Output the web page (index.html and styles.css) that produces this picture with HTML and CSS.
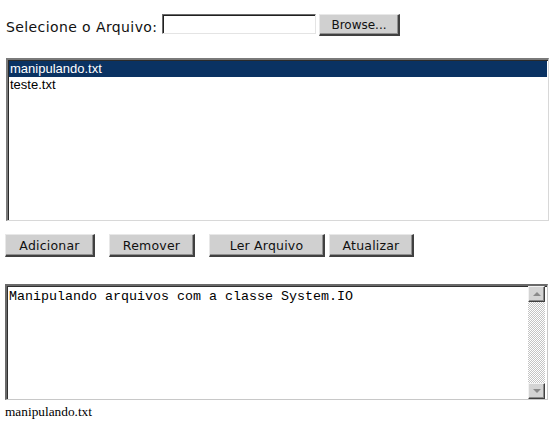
FILE: index.html
```html
<!DOCTYPE html>
<html>
<head>
<meta charset="utf-8">
<link rel="stylesheet" href="styles.css">
</head>
<body>
<div class="page">
  <div class="file-row">
    <span class="label">Selecione o Arquivo:</span>
    <span class="file-input"></span>
    <span class="btn browse">Browse...</span>
  </div>

  <div class="listbox">
    <div class="item selected">manipulando.txt</div>
    <div class="item">teste.txt</div>
  </div>

  <div class="actions">
    <span class="btn act w-add">Adicionar</span>
    <span class="btn act w-rem">Remover</span>
    <span class="btn act w-ler">Ler Arquivo</span>
    <span class="btn act w-atu">Atualizar</span>
  </div>

  <div class="textarea">
    <div class="ta-content">Manipulando arquivos com a classe System.IO</div>
    <div class="scrollbar">
      <div class="sb-btn"><span class="arrow up"></span></div>
      <div class="sb-track"></div>
      <div class="sb-btn"><span class="arrow down"></span></div>
    </div>
  </div>

  <div class="status">manipulando.txt</div>
</div>
</body>
</html>
```
FILE: styles.css
```css
html, body {
  margin: 0;
  padding: 0;
  background: #ffffff;
}

.page {
  width: 556px;
  height: 423px;
  overflow: hidden;
  box-sizing: border-box;
  padding-top: 14px;
}

.file-row {
  display: flex;
  align-items: flex-start;
  padding-left: 6px;
  height: 22px;
}

.label {
  font-family: "DejaVu Sans", Verdana, sans-serif;
  font-size: 14px;
  letter-spacing: 0.4px;
  color: #111;
  line-height: 22px;
  margin-top: 2px;
  width: 156px;
  white-space: nowrap;
}

.file-input {
  display: block;
  width: 154px;
  height: 20px;
  box-sizing: border-box;
  border-top: 1px solid #6b6b6b;
  border-left: 1px solid #6b6b6b;
  border-right: 1px solid #e4e4e4;
  border-bottom: 1px solid #e4e4e4;
  box-shadow: inset 1px 1px 0 #202020;
  background: #fff;
}

.btn {
  display: flex;
  align-items: center;
  justify-content: center;
  box-sizing: border-box;
  background: #d0d0d0;
  border-top: 1px solid #e8e8e8;
  border-left: 1px solid #e8e8e8;
  border-right: 2px solid #404040;
  border-bottom: 2px solid #404040;
  box-shadow: inset -1px -1px 0 #909090;
  font-family: "DejaVu Sans", Verdana, sans-serif;
  font-size: 12px;
  color: #111;
  white-space: nowrap;
}

.browse {
  width: 81px;
  height: 22px;
  margin-left: 3px;
}

.listbox {
  margin: 22px 0 0 6px;
  width: 543px;
  height: 163px;
  box-sizing: border-box;
  border-top: 2px solid #7a7a7a;
  border-left: 2px solid #7a7a7a;
  border-right: 1px solid #d8d8d8;
  border-bottom: 1px solid #d8d8d8;
  box-shadow: inset 1px 1px 0 #2a2a2a;
  padding: 1px 1px 0 1px;
  background: #fff;
}

.item {
  font-family: "Liberation Sans", Arial, sans-serif;
  font-size: 13px;
  line-height: 16px;
  height: 16px;
  padding-left: 1px;
  color: #000;
  white-space: nowrap;
}

.item.selected {
  background: #0a3262;
  color: #fff;
}

.actions {
  display: flex;
  margin: 13px 0 0 5px;
  height: 23px;
}

.act {
  height: 23px;
  font-size: 12.5px;
  letter-spacing: 0.2px;
}

.w-add { width: 90px; }
.w-rem { width: 86px; margin-left: 14px; }
.w-ler { width: 116px; margin-left: 14px; }
.w-atu { width: 85px; margin-left: 4px; }

.textarea {
  display: flex;
  margin: 27px 0 0 5px;
  width: 543px;
  height: 116px;
  box-sizing: border-box;
  border-top: 2px solid #6a6a6a;
  border-left: 2px solid #6a6a6a;
  border-right: 1px solid #c8c8c8;
  border-bottom: 1px solid #c8c8c8;
  box-shadow: inset 1px 1px 0 #303030;
  background: #fff;
}

.ta-content {
  flex: 1;
  font-family: "Liberation Mono", "Courier New", monospace;
  font-size: 13.33px;
  line-height: 15px;
  padding: 3px 0 0 2px;
  color: #000;
  white-space: pre;
}

.scrollbar {
  display: flex;
  flex-direction: column;
  width: 17px;
  margin-right: 2px;
}

.sb-btn {
  height: 16px;
  box-sizing: border-box;
  background: #d4d4d4;
  border-top: 1px solid #f2f2f2;
  border-left: 1px solid #f2f2f2;
  border-right: 1px solid #404040;
  border-bottom: 1px solid #404040;
  box-shadow: inset -1px -1px 0 #8a8a8a;
  display: flex;
  align-items: center;
  justify-content: center;
}

.sb-track {
  flex: 1;
  background-color: #ffffff;
  background-image: conic-gradient(#c4c4c4 25%, #ffffff 0 50%, #c4c4c4 0 75%, #ffffff 0);
  background-size: 2px 2px;
}

.arrow {
  width: 0;
  height: 0;
  border-left: 4px solid transparent;
  border-right: 4px solid transparent;
}

.arrow.up {
  border-bottom: 4px solid #8a8a8a;
}

.arrow.down {
  border-top: 4px solid #8a8a8a;
}

.status {
  font-family: "Liberation Serif", "Times New Roman", serif;
  font-size: 13.33px;
  line-height: 16px;
  margin: 4px 0 0 5px;
  color: #000;
}
```
